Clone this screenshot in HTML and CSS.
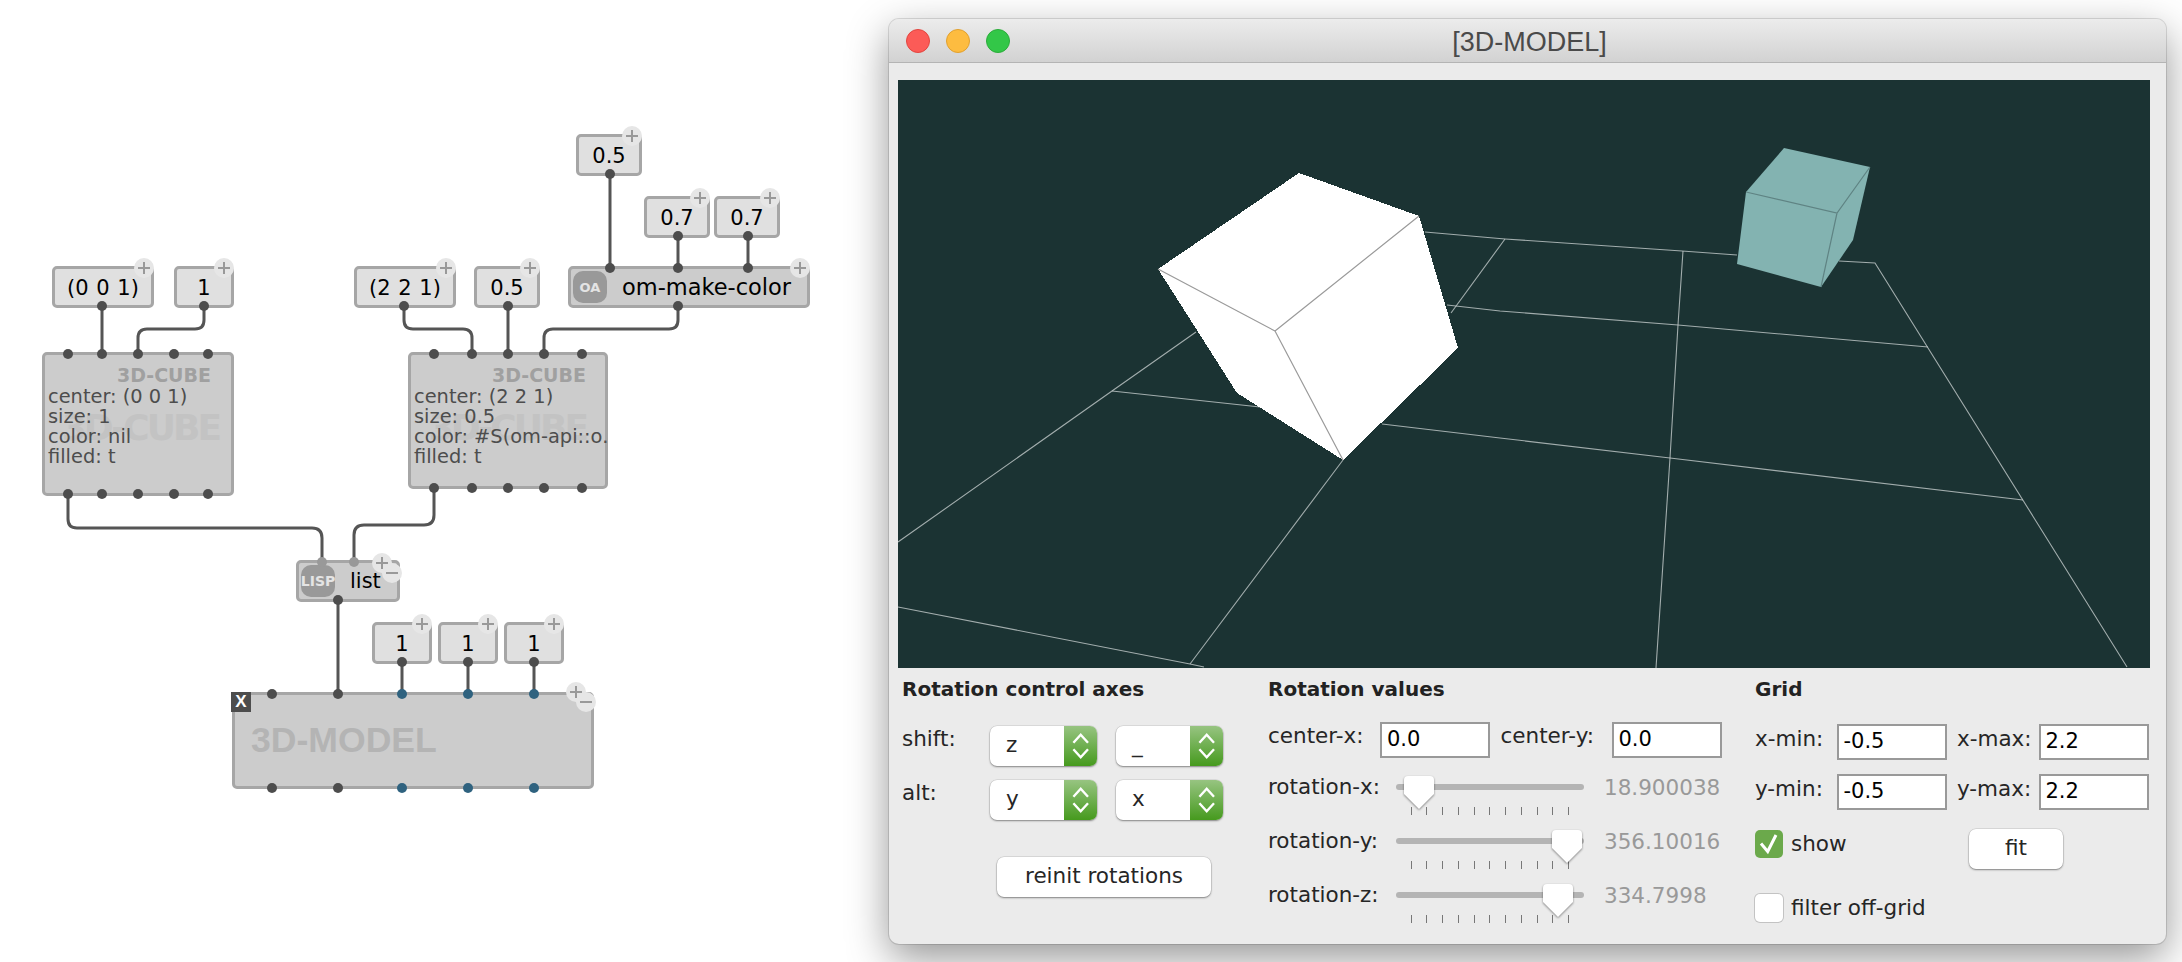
FILE: index.html
```html
<!DOCTYPE html>
<html lang="en">
<head>
<meta charset="utf-8">
<title>3D-MODEL</title>
<link rel="stylesheet" href="styles.css">
</head>
<body>
<div class="patch">
  <div class="node value n-a">(0 0 1)<i class="plus"></i></div>
  <div class="node value n-b">1<i class="plus"></i></div>
  <div class="node value n-c">(2 2 1)<i class="plus"></i></div>
  <div class="node value n-d">0.5<i class="plus"></i></div>
  <div class="node value n-e">0.5<i class="plus"></i></div>
  <div class="node value n-f">0.7<i class="plus"></i></div>
  <div class="node value n-g">0.7<i class="plus"></i></div>
  <div class="node fn n-om"><span class="fn-icon fn-oa">OA</span><span class="fn-name">om-make-color</span><i class="plus"></i></div>
  <div class="node box n-cube1">
    <div class="box-title">3D-CUBE</div>
    <div class="box-ghost">3D-CUBE</div>
    <div class="box-lines">center: (0 0 1)<br>size: 1<br>color: nil<br>filled: t</div>
  </div>
  <div class="node box n-cube2">
    <div class="box-title">3D-CUBE</div>
    <div class="box-ghost">3D-CUBE</div>
    <div class="box-lines">center: (2 2 1)<br>size: 0.5<br>color: #S(om-api::o.<br>filled: t</div>
  </div>
  <div class="node fn n-list"><span class="fn-icon fn-lisp">LISP</span><span class="fn-name list-name">list</span><i class="plus plus-a"></i><i class="minus minus-a"></i></div>
  <div class="node value n-h">1<i class="plus"></i></div>
  <div class="node value n-i">1<i class="plus"></i></div>
  <div class="node value n-j">1<i class="plus"></i></div>
  <div class="node n-model"><span class="close-x">X</span><span class="model-name">3D-MODEL</span><i class="plus plus-b"></i><i class="minus minus-b"></i></div>

  <svg class="wires" viewBox="0 0 880 962" width="880" height="962" aria-hidden="true">
    <g class="wire">
      <path d="M102 306V354"/>
      <path d="M204 306V320Q204 329 195 329H147Q138 329 138 338V354"/>
      <path d="M404 306V320Q404 329 413 329H463Q472 329 472 338V354"/>
      <path d="M508 306V354"/>
      <path d="M678 306V320Q678 329 669 329H553Q544 329 544 338V354"/>
      <path d="M610 174V268"/>
      <path d="M678 236V268"/>
      <path d="M748 236V268"/>
      <path d="M68 494V519Q68 528 77 528H312Q322 528 322 538V562"/>
      <path d="M434 488V515Q434 525 424 525H364Q354 525 354 535V562"/>
      <path d="M338 600V694"/>
      <path d="M402 662V694"/>
      <path d="M468 662V694"/>
      <path d="M534 662V694"/>
    </g>
    <g class="dot">
      <circle cx="102" cy="306" r="5"/><circle cx="204" cy="306" r="5"/><circle cx="404" cy="306" r="5"/><circle cx="508" cy="306" r="5"/><circle cx="678" cy="306" r="5"/>
      <circle cx="610" cy="174" r="5"/><circle cx="678" cy="236" r="5"/><circle cx="748" cy="236" r="5"/>
      <circle cx="610" cy="268" r="5"/><circle cx="678" cy="268" r="5"/><circle cx="748" cy="268" r="5"/>
      <circle cx="68" cy="354" r="5"/><circle cx="102" cy="354" r="5"/><circle cx="138" cy="354" r="5"/><circle cx="174" cy="354" r="5"/><circle cx="208" cy="354" r="5"/>
      <circle cx="68" cy="494" r="5"/><circle cx="102" cy="494" r="5"/><circle cx="138" cy="494" r="5"/><circle cx="174" cy="494" r="5"/><circle cx="208" cy="494" r="5"/>
      <circle cx="434" cy="354" r="5"/><circle cx="472" cy="354" r="5"/><circle cx="508" cy="354" r="5"/><circle cx="544" cy="354" r="5"/><circle cx="582" cy="354" r="5"/>
      <circle cx="434" cy="488" r="5"/><circle cx="472" cy="488" r="5"/><circle cx="508" cy="488" r="5"/><circle cx="544" cy="488" r="5"/><circle cx="582" cy="488" r="5"/>
      <circle cx="338" cy="600" r="5"/><circle cx="402" cy="662" r="5"/><circle cx="468" cy="662" r="5"/><circle cx="534" cy="662" r="5"/>
      <circle cx="272" cy="694" r="5"/><circle cx="338" cy="694" r="5"/><circle cx="272" cy="788" r="5"/><circle cx="338" cy="788" r="5"/>
    </g>
    <g class="dot-soft"><circle cx="322" cy="562" r="5"/><circle cx="354" cy="562" r="5"/></g>
    <g class="dot-blue">
      <circle cx="402" cy="694" r="5"/><circle cx="468" cy="694" r="5"/><circle cx="534" cy="694" r="5"/>
      <circle cx="402" cy="788" r="5"/><circle cx="468" cy="788" r="5"/><circle cx="534" cy="788" r="5"/>
    </g>
  </svg>
</div>

<div class="window">
  <div class="titlebar">
    <span class="light light-red"></span><span class="light light-yellow"></span><span class="light light-green"></span>
    <span class="title">[3D-MODEL]</span>
  </div>
  <div class="view">
    <svg viewBox="898 80 1252 588" width="1252" height="588" aria-hidden="true">
      <g class="grid-line">
        <path d="M1425 232L1505 239L1682 251L1737 255M1839 261L1875 263L2127 667"/>
        <path d="M1447 305L1500 311L1678 325L1928 347"/>
        <path d="M1112 391L1260 407M1382 424L1500 438L1670 458L2023 500"/>
        <path d="M898 607L1190 664L1204 667"/>
        <path d="M898 542L1112 391L1196 332"/>
        <path d="M1505 239L1451 313"/>
        <path d="M1343 460L1190 664"/>
        <path d="M1683 251L1678 325L1670 458L1656 668"/>
      </g>
      <polygon class="cube-white" points="1299,173 1419,216 1458,348 1343,460 1237,393 1158,269"/>
      <path class="cube-white-edge" d="M1158 269L1275 331L1419 216M1275 331L1343 460"/>
      <polygon class="cube-teal" points="1784,148 1870,167 1853,240 1821,287 1737,264 1746,192"/>
      <path class="cube-teal-edge" d="M1746 192L1837 213L1870 167M1837 213L1821 287"/>
    </svg>
  </div>
  <div class="controls">
    <section class="col col-axes">
      <h2 class="heading">Rotation control axes</h2>
      <div class="axes-rows">
        <div class="axes-row">
          <span class="lbl lbl-axis">shift:</span>
          <div class="select"><span class="select-val">z</span><span class="select-arrows"><svg viewBox="0 0 33 40" width="33" height="40"><path d="M9.4 16.7L16.7 8.7L24 16.7M9.4 23.3L16.7 31.3L24 23.3"/></svg></span></div>
          <div class="select"><span class="select-val">_</span><span class="select-arrows"><svg viewBox="0 0 33 40" width="33" height="40"><path d="M9.4 16.7L16.7 8.7L24 16.7M9.4 23.3L16.7 31.3L24 23.3"/></svg></span></div>
        </div>
        <div class="axes-row">
          <span class="lbl lbl-axis">alt:</span>
          <div class="select"><span class="select-val">y</span><span class="select-arrows"><svg viewBox="0 0 33 40" width="33" height="40"><path d="M9.4 16.7L16.7 8.7L24 16.7M9.4 23.3L16.7 31.3L24 23.3"/></svg></span></div>
          <div class="select"><span class="select-val">x</span><span class="select-arrows"><svg viewBox="0 0 33 40" width="33" height="40"><path d="M9.4 16.7L16.7 8.7L24 16.7M9.4 23.3L16.7 31.3L24 23.3"/></svg></span></div>
        </div>
      </div>
      <div class="btn btn-reinit">reinit rotations</div>
    </section>

    <section class="col col-rot">
      <h2 class="heading">Rotation values</h2>
      <div class="field-row center-row">
        <span class="lbl lbl-field">center-x:</span><span class="input">0.0</span>
        <span class="lbl lbl-field">center-y:</span><span class="input">0.0</span>
      </div>
      <div class="rot-row">
        <span class="lbl lbl-rot">rotation-x:</span>
        <div class="slider">
          <div class="track"></div>
          <div class="ticks"><i></i><i></i><i></i><i></i><i></i><i></i><i></i><i></i><i></i><i></i><i></i></div>
          <svg class="thumb" style="left:7px" viewBox="0 0 32 36" width="32" height="36"><path d="M5 1H27Q31 1 31 5V19L16 34L1 19V5Q1 1 5 1Z"/></svg>
        </div>
        <span class="rot-val">18.900038</span>
      </div>
      <div class="rot-row">
        <span class="lbl lbl-rot">rotation-y:</span>
        <div class="slider">
          <div class="track"></div>
          <div class="ticks"><i></i><i></i><i></i><i></i><i></i><i></i><i></i><i></i><i></i><i></i><i></i></div>
          <svg class="thumb" style="left:155px" viewBox="0 0 32 36" width="32" height="36"><path d="M5 1H27Q31 1 31 5V19L16 34L1 19V5Q1 1 5 1Z"/></svg>
        </div>
        <span class="rot-val">356.10016</span>
      </div>
      <div class="rot-row">
        <span class="lbl lbl-rot">rotation-z:</span>
        <div class="slider">
          <div class="track"></div>
          <div class="ticks"><i></i><i></i><i></i><i></i><i></i><i></i><i></i><i></i><i></i><i></i><i></i></div>
          <svg class="thumb" style="left:146px" viewBox="0 0 32 36" width="32" height="36"><path d="M5 1H27Q31 1 31 5V19L16 34L1 19V5Q1 1 5 1Z"/></svg>
        </div>
        <span class="rot-val">334.7998</span>
      </div>
    </section>

    <section class="col col-grid">
      <h2 class="heading">Grid</h2>
      <div class="grid-rows">
        <div class="field-row">
          <span class="lbl lbl-grid">x-min:</span><span class="input">-0.5</span>
          <span class="lbl lbl-grid">x-max:</span><span class="input">2.2</span>
        </div>
        <div class="field-row">
          <span class="lbl lbl-grid">y-min:</span><span class="input">-0.5</span>
          <span class="lbl lbl-grid">y-max:</span><span class="input">2.2</span>
        </div>
      </div>
      <div class="show-row">
        <span class="check check-on"><svg viewBox="0 0 28 28" width="28" height="28"><path d="M6 13.5L12.7 21.5L21 5"/></svg></span>
        <span class="check-label">show</span>
        <div class="btn btn-fit">fit</div>
      </div>
      <div class="filter-row">
        <span class="check"></span>
        <span class="check-label">filter off-grid</span>
      </div>
    </section>
  </div>
</div>
</body>
</html>
```

FILE: styles.css
```css
* { box-sizing: border-box; }
html, body { margin: 0; padding: 0; }
body {
  width: 2182px;
  height: 962px;
  overflow: hidden;
  background: #fff;
  position: relative;
  font-family: "DejaVu Sans", sans-serif;
}

/* patch: free canvas of boxes */
.patch { position: absolute; left: 0; top: 0; width: 880px; height: 962px; }
.wires { position: absolute; left: 0; top: 0; pointer-events: none; }
.wire path { fill: none; stroke: #555; stroke-width: 3; }
.dot circle { fill: #4d4d4d; }
.dot-soft circle { fill: #999; }
.dot-blue circle { fill: #2f627f; }

.node {
  position: absolute;
  border: 3px solid #a6a6a6;
  border-radius: 5px;
  background: #ccc;
}
.value {
  display: flex;
  align-items: center;
  justify-content: center;
  height: 42px;
  padding-top: 2px;
  background: #e0e0e0;
  color: #000;
  font-size: 21px;
  word-spacing: 1px;
}
.n-a { left: 52px; top: 266px; width: 102px; }
.n-b { left: 174px; top: 266px; width: 60px; }
.n-c { left: 354px; top: 266px; width: 102px; }
.n-d { left: 474px; top: 266px; width: 66px; }
.n-e { left: 576px; top: 134px; width: 66px; }
.n-f { left: 644px; top: 196px; width: 66px; }
.n-g { left: 714px; top: 196px; width: 66px; }
.n-h { left: 372px; top: 622px; width: 60px; }
.n-i { left: 438px; top: 622px; width: 60px; }
.n-j { left: 504px; top: 622px; width: 60px; }

.plus, .minus {
  position: absolute;
  width: 20px;
  height: 20px;
  border-radius: 50%;
  background: #e6e6e6;
  right: -3px;
  top: -11px;
}
.plus::before, .minus::before {
  content: "";
  position: absolute;
  left: 4px;
  top: 9px;
  width: 12px;
  height: 1.6px;
  background: #999;
}
.plus::after {
  content: "";
  position: absolute;
  left: 9.2px;
  top: 4px;
  width: 1.6px;
  height: 12px;
  background: #999;
}
.plus-a { right: 5px; top: -10px; }
.minus-a { right: -5px; top: 0; }
.plus-b { right: 5px; top: -13px; }
.minus-b { right: -5px; top: -3px; }

.fn { display: flex; align-items: center; height: 42px; }
.n-om { left: 568px; top: 266px; width: 242px; }
.n-list { left: 296px; top: 560px; width: 104px; }
.fn-icon {
  display: flex;
  align-items: center;
  justify-content: center;
  width: 34px;
  height: 32px;
  margin-left: 2px;
  border-radius: 10px;
  background: #999;
  color: #e4e4e4;
  font-weight: 700;
}
.fn-oa { font-size: 13px; }
.fn-lisp { font-size: 14px; }
.fn-name { margin-left: 15px; color: #000; font-size: 22.5px; }
.list-name { font-size: 21px; }

.box { overflow: visible; }
.n-cube1 { left: 42px; top: 352px; width: 192px; height: 144px; }
.n-cube2 { left: 408px; top: 352px; width: 200px; height: 137px; }
.box-title {
  position: absolute;
  right: 20px;
  top: 8px;
  color: #a0a0a0;
  font-size: 19px;
  font-weight: 700;
  line-height: 24px;
}
.box-ghost {
  position: absolute;
  right: 12px;
  top: 51px;
  color: #c3c3c3;
  font-size: 36px;
  font-weight: 700;
  letter-spacing: -3px;
  line-height: 44px;
}
.n-cube2 .box-ghost { right: 19px; }
.n-cube2 .box-title { right: 19px; }
.box-lines {
  position: absolute;
  left: 3px;
  top: 32px;
  color: #4d4d4d;
  font-size: 19.4px;
  line-height: 20px;
  white-space: nowrap;
}

.n-model { left: 232px; top: 692px; width: 362px; height: 97px; }
.close-x {
  position: absolute;
  left: -4px;
  top: -3px;
  width: 20px;
  height: 20px;
  background: #4d4d4d;
  color: #fff;
  font: 700 17px/20px "Liberation Sans", sans-serif;
  text-align: center;
}
.model-name {
  position: absolute;
  left: 16px;
  top: 23px;
  color: #b4b4b4;
  font: 700 35.6px/44px "Liberation Sans", sans-serif;
}

/* window */
.window {
  position: absolute;
  left: 889px;
  top: 19px;
  width: 1277px;
  height: 925px;
  background: #ebebeb;
  border-radius: 10px;
  box-shadow: 0 0 0 1px rgba(0,0,0,.12), 0 14px 42px rgba(0,0,0,.42);
  overflow: hidden;
  color: #262626;
  font-size: 21.5px;
}
.titlebar {
  position: relative;
  display: flex;
  align-items: center;
  height: 44px;
  padding-left: 17px;
  gap: 16px;
  background: linear-gradient(#ececec, #d2d2d2);
  border-bottom: 1px solid #b4b4b4;
}
.light { width: 24px; height: 24px; border-radius: 50%; border: 1px solid; }
.light-red { background: #fc5b57; border-color: #e2463f; }
.light-yellow { background: #fdbc40; border-color: #e1a02f; }
.light-green { background: #33c748; border-color: #2cac3b; }
.title {
  position: absolute;
  left: 0;
  right: 0;
  top: 1px;
  text-align: center;
  padding-left: 4px;
  line-height: 44px;
  color: #4a4a4a;
  font-family: "Liberation Sans", sans-serif;
  font-size: 27px;
}
.view {
  width: 1252px;
  height: 588px;
  margin: 17px 0 0 9px;
  background: #1b3333;
}
.view svg { display: block; }
.grid-line path { fill: none; stroke: #c4cccc; stroke-width: 1.1; opacity: .8; }
.cube-white { fill: #fff; shape-rendering: crispEdges; }
.cube-white-edge { fill: none; stroke: #9a9a9a; stroke-width: 1.2; }
.cube-teal { fill: #83b3b1; }
.cube-teal-edge { fill: none; stroke: #5f8383; stroke-width: 1.2; }

.controls { display: flex; padding: 9px 0 0 13px; }
.col { flex: none; }
.col-axes { width: 366px; }
.col-rot { width: 487px; }
.col-grid { width: 400px; }
.heading {
  margin: 0;
  height: 24px;
  color: #222;
  font-size: 20px;
  font-weight: 700;
  line-height: 24px;
}
.lbl { flex: none; display: block; white-space: nowrap; }

.axes-rows { display: flex; flex-direction: column; gap: 14px; margin-top: 25px; }
.axes-row { display: flex; height: 40px; }
.lbl-axis { width: 88px; line-height: 25px; }
.select {
  display: flex;
  width: 107px;
  height: 40px;
  margin-right: 19px;
  border-radius: 7px;
  overflow: hidden;
  background: #fff;
  box-shadow: 0 0 0 .5px rgba(0,0,0,.12), 0 1px 2px rgba(0,0,0,.4);
}
.select-val { flex: 1; padding-left: 16px; line-height: 38px; color: #262626; }
.select-arrows {
  flex: none;
  width: 33px;
  height: 40px;
  background: linear-gradient(#97c481, #469a1e);
}
.select-arrows svg { display: block; }
.select-arrows path { fill: none; stroke: #fff; stroke-width: 2.4; }

.btn {
  text-align: center;
  height: 40px;
  line-height: 38px;
  background: #fff;
  border-radius: 7px;
  box-shadow: 0 0 0 .5px rgba(0,0,0,.14), 0 1px 2px rgba(0,0,0,.4);
  color: #262626;
}
.btn-reinit { width: 214px; margin: 37px 0 0 95px; font-size: 21.5px; }

.field-row { display: flex; height: 36px; }
.center-row { margin-top: 21px; height: 38px; }
.lbl-field { width: 111px; line-height: 27px; }
.col-rot .lbl-field:first-child { width: 112px; }
.input {
  flex: none;
  display: block;
  width: 110px;
  height: 36px;
  margin-right: 10.5px;
  padding-left: 5px;
  background: #fff;
  border: 2px solid #999;
  color: #000;
  font-size: 21px;
  line-height: 30px;
}
.rot-row { display: flex; height: 54px; }
.lbl-rot { width: 128px; line-height: 53px; }
.slider { position: relative; flex: none; width: 188px; padding-top: 24px; }
.track { height: 6px; border-radius: 3px; background: #b4b4b4; }
.ticks {
  display: flex;
  justify-content: space-between;
  margin: 17px 15px 0 14.5px;
}
.ticks i { display: block; width: 1px; height: 8px; background: #777; }
.thumb {
  position: absolute;
  top: 15px;
  filter: drop-shadow(0 1px 1px rgba(0,0,0,.45));
}
.thumb path { fill: #fff; }
.rot-val { margin-left: 20px; color: #999; line-height: 56px; }

.grid-rows { display: flex; flex-direction: column; gap: 14px; margin-top: 23px; }
.lbl-grid { width: 81.5px; line-height: 30px; }
.show-row { position: relative; display: flex; height: 40px; margin-top: 19px; padding-top: 1px; }
.filter-row { display: flex; margin-top: 25px; }
.check {
  flex: none;
  display: block;
  width: 28px;
  height: 28px;
  border-radius: 5px;
  background: #fff;
  box-shadow: 0 0 0 1px rgba(0,0,0,.17);
}
.check-on { background: #6ba94b; box-shadow: none; }
.check svg { display: block; }
.check path { fill: none; stroke: #fff; stroke-width: 3; }
.check-label { margin-left: 8px; line-height: 28px; white-space: nowrap; }
.btn-fit { width: 94px; margin-left: 122.5px; margin-top: -1px; }
```
